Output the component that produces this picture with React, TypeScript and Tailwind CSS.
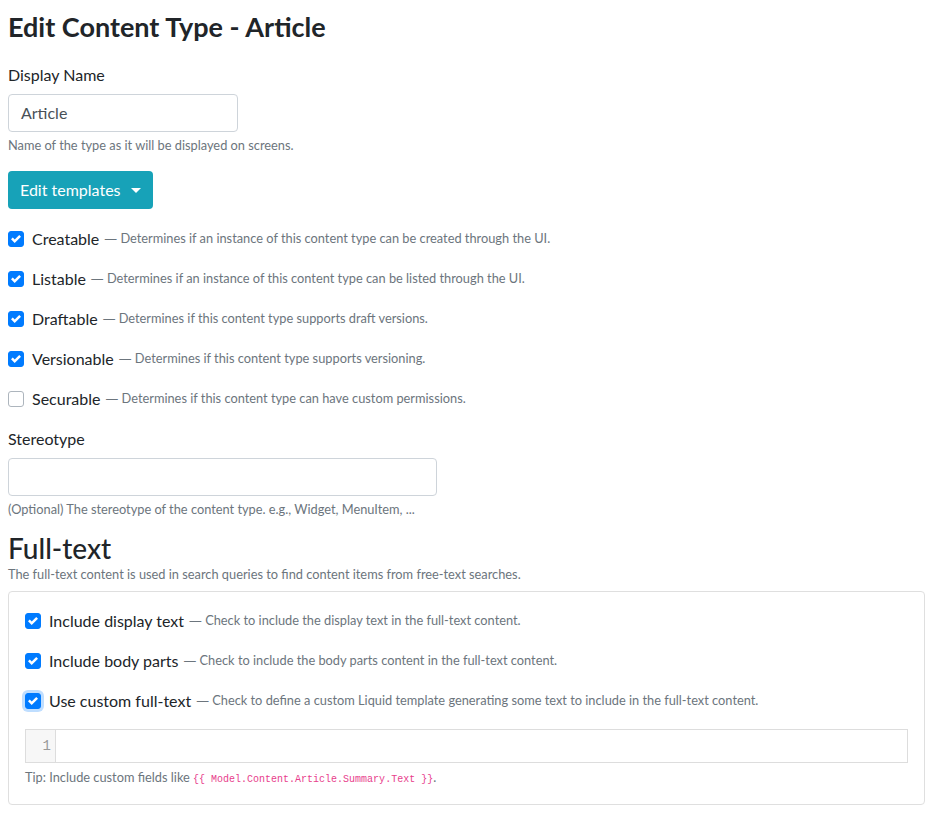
import React from "react";

const font = { fontFamily: 'Lato, "Noto Sans", sans-serif' };
const dashFont = { fontFamily: '"Noto Sans", sans-serif' };

function Check({ checked = true, focus = false }: { checked?: boolean; focus?: boolean }) {
  return (
    <span
      className={
        "inline-flex h-4 w-4 shrink-0 items-center justify-center rounded-[3px] " +
        (checked ? "bg-[#007bff] border border-[#007bff]" : "bg-white border border-[#adb5bd]") +
        (focus ? " shadow-[0_0_0_3px_rgba(0,123,255,0.25)]" : "")
      }
    >
      {checked && (
        <svg width="10" height="10" viewBox="0 0 8 8">
          <path fill="#fff" d="M6.564.75l-3.59 3.612-1.538-1.55L0 4.26l2.974 2.99L8 2.193z" />
        </svg>
      )}
    </span>
  );
}

function Row({ label, desc, checked = true, focus = false }: { label: string; desc: string; checked?: boolean; focus?: boolean }) {
  return (
    <div className="flex h-[40px] items-center">
      <Check checked={checked} focus={focus} />
      <span className="ml-2 text-[16px] text-[#212529]">{label}</span>
      <span className="ml-[5px] text-[12.8px] text-[#6c757d]">
        <span style={dashFont}>—</span> {desc}
      </span>
    </div>
  );
}

export default function App() {
  return (
    <div className="min-h-[815px] bg-white pl-2 pr-[14px] pt-[8px] text-[#212529]" style={font}>
      <h1 className="text-[27px] font-bold leading-[38px] text-[#212529]">Edit Content Type - Article</h1>
      <div className="mt-[17px] text-[16px] leading-[24px]">Display Name</div>
      <div className="mt-[7px] flex h-[38px] w-[230px] items-center rounded-[4px] border border-[#ced4da] px-3 text-[16px] text-[#495057]">
        Article
      </div>
      <div className="mt-[4px] text-[12.8px] leading-[19px] text-[#6c757d]">Name of the type as it will be displayed on screens.</div>
      <button className="mt-[16px] flex h-[38px] items-center rounded-[4px] bg-[#17a2b8] px-3 text-[16px] text-white">
        Edit templates
        <span className="ml-[10px] inline-block h-0 w-0 border-x-[5px] border-t-[5px] border-x-transparent border-t-white" />
      </button>
      <div className="mt-[10px]">
        <Row label="Creatable" desc="Determines if an instance of this content type can be created through the UI." />
        <Row label="Listable" desc="Determines if an instance of this content type can be listed through the UI." />
        <Row label="Draftable" desc="Determines if this content type supports draft versions." />
        <Row label="Versionable" desc="Determines if this content type supports versioning." />
        <Row label="Securable" checked={false} desc="Determines if this content type can have custom permissions." />
      </div>
      <div className="mt-[8px] text-[16px] leading-[24px]">Stereotype</div>
      <div className="mt-[7px] h-[38px] w-[429px] rounded-[4px] border border-[#ced4da]" />
      <div className="mt-[4px] text-[12.8px] leading-[19px] text-[#6c757d]">
        (Optional) The stereotype of the content type. e.g., Widget, MenuItem, ...
      </div>
      <h2 className="mt-[12px] text-[28px] font-medium leading-[34px] text-[#212529]">Full-text</h2>
      <div className="text-[12.8px] leading-[19px] text-[#6c757d]">
        The full-text content is used in search queries to find content items from free-text searches.
      </div>
      <div className="mt-[7px] rounded-[4px] border border-[#dfdfdf] px-4 pb-[14px] pt-[9px]">
        <Row label="Include display text" desc="Check to include the display text in the full-text content." />
        <Row label="Include body parts" desc="Check to include the body parts content in the full-text content." />
        <Row label="Use custom full-text" focus desc="Check to define a custom Liquid template generating some text to include in the full-text content." />
        <div className="mt-[8px] flex h-[34px] border border-[#ddd]">
          <div className="flex w-[30px] items-center justify-end border-r border-[#ddd] bg-[#f7f7f7] pr-[4px] text-[14px] text-[#999]" style={{ fontFamily: '"Liberation Mono", monospace' }}>
            1
          </div>
          <div className="flex-1 bg-white" />
        </div>
        <div className="mt-[4px] text-[12.8px] leading-[20px] text-[#6c757d]">
          Tip: Include custom fields like{" "}
          <code className="text-[10px] text-[#e83e8c]" style={{ fontFamily: '"Liberation Mono", monospace' }}>
            {"{{ Model.Content.Article.Summary.Text }}"}
          </code>
          .
        </div>
      </div>
    </div>
  );
}
